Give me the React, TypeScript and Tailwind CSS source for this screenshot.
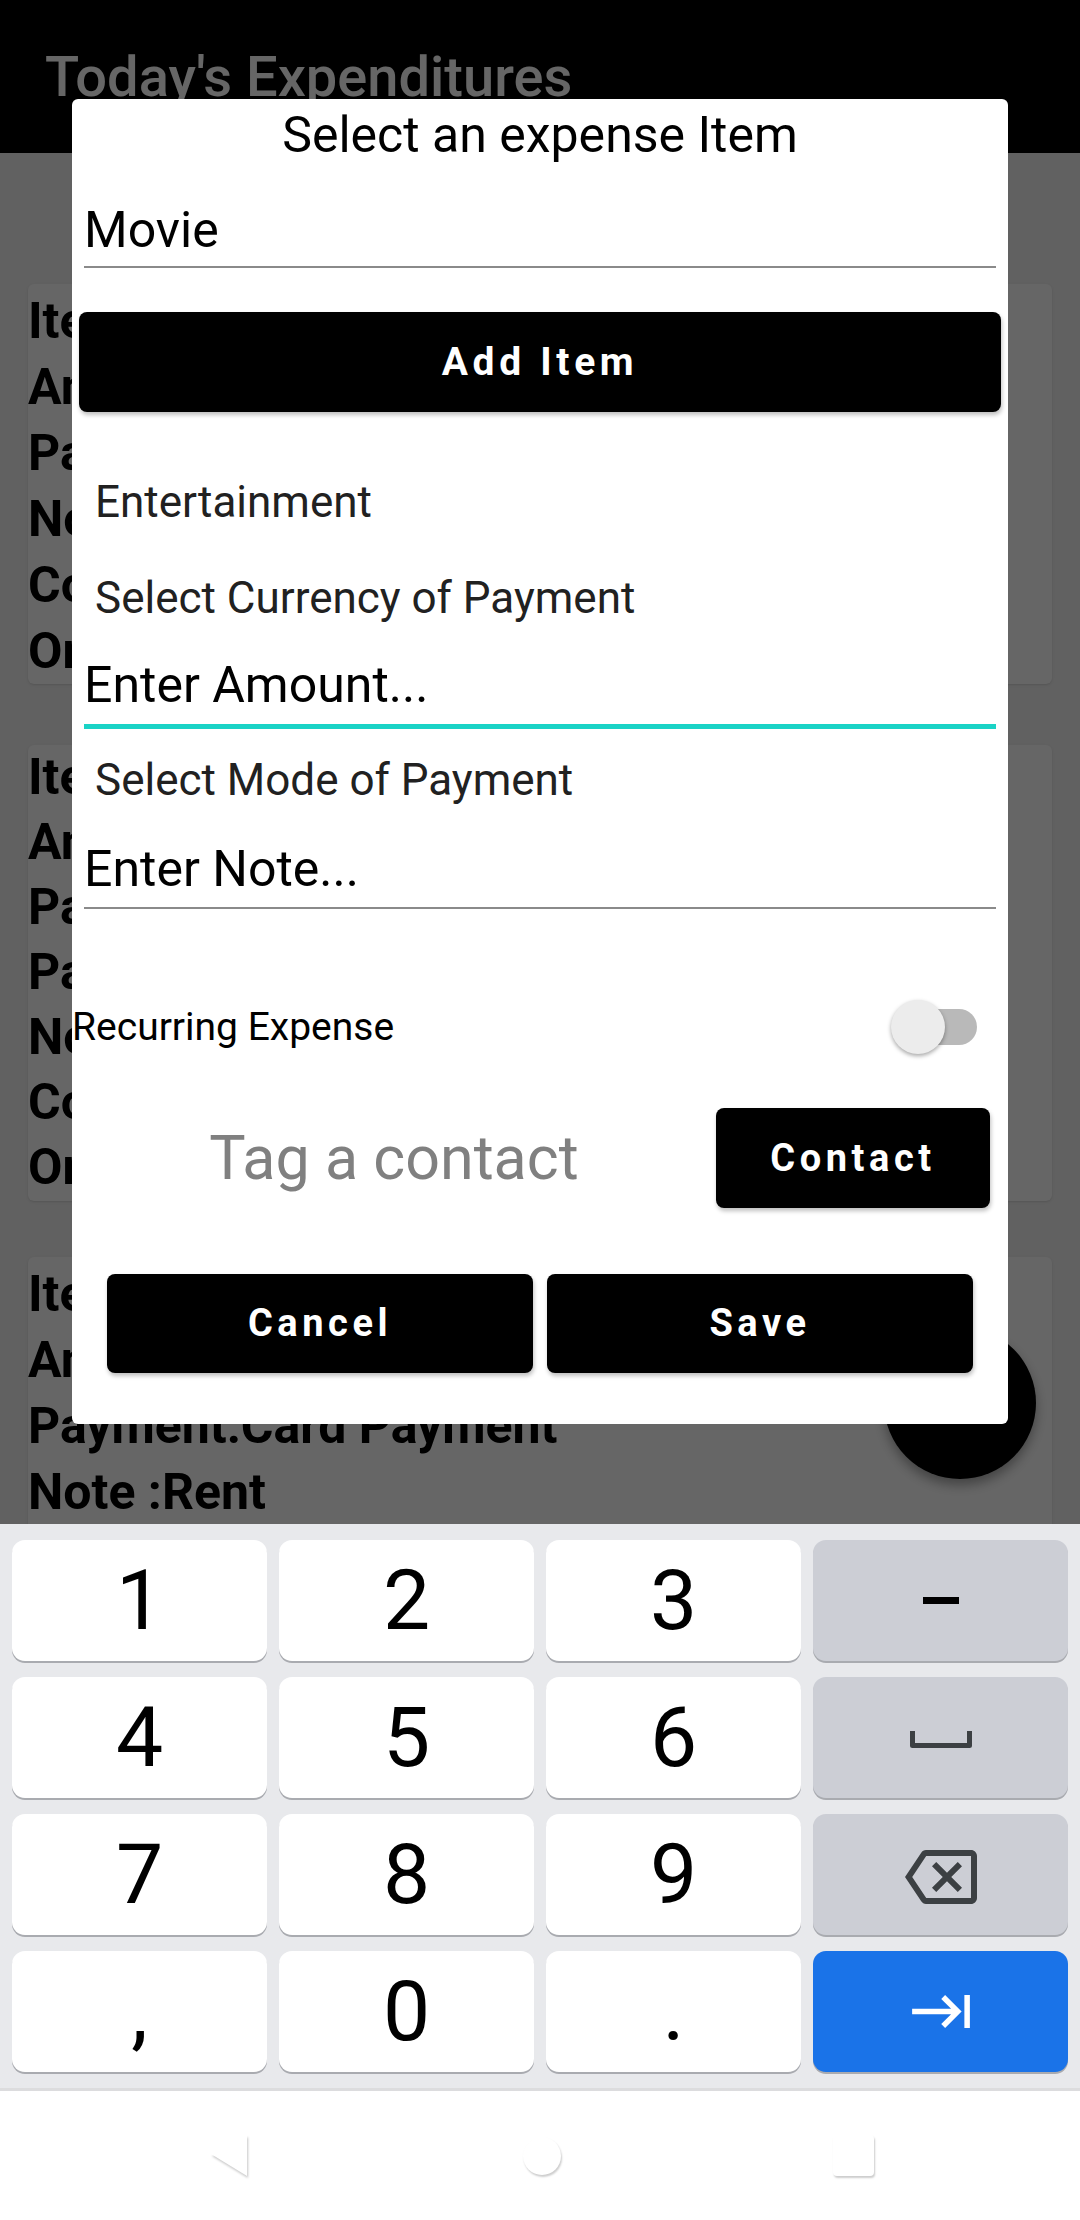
import React from 'react';

const cards: string[][] = [
  ['Item :Popcorn', 'Amount :150', 'Payment:Cash', 'Note :Snacks', 'Contact :None', 'On :Today'],
  ['Item :Groceries', 'Amount :1200', 'Payment:Card Payment', 'Paid in :INR', 'Note :Weekly', 'Contact :None', 'On :Today'],
  ['Item :House Rent', 'Amount :15000', 'Payment:Card Payment', 'Note :Rent', 'Contact :None', 'On :Today'],
];

const Key: React.FC<{ kind?: 'white' | 'fn' | 'blue'; children: React.ReactNode }> = ({ kind = 'white', children }) => {
  const bg = kind === 'white' ? 'bg-white' : kind === 'fn' ? 'bg-[#ccced5]' : 'bg-[#1a73e8]';
  return (
    <div className={`${bg} h-[121px] rounded-[13px] shadow-[0_2px_0_#a9abb0] flex items-center justify-center text-[84px] leading-none text-black`}>
      {children}
    </div>
  );
};

const ActionButton: React.FC<{ label: string; className?: string }> = ({ label, className = '' }) => (
  <div className={`bg-black rounded-[8px] shadow-[1px_3px_4px_rgba(0,0,0,0.25)] flex items-center justify-center text-white font-bold text-[38px] tracking-[0.12em] ${className}`}>
    {label}
  </div>
);

export default function App() {
  return (
    <div className="w-[1080px] h-[2220px] overflow-hidden flex flex-col font-['Roboto',sans-serif]">
      {/* App behind the dialog */}
      <div className="relative h-[1524px] flex flex-col overflow-hidden">
        <div className="h-[153px] bg-black flex items-center px-[45px] shrink-0">
          <span className="text-white text-[56px] font-medium leading-none">Today's Expenditures</span>
        </div>
        <div className="flex-1 bg-[#f2f2f2] px-[28px] pt-[131px] flex flex-col">
          <div className="bg-white rounded-[6px] shadow-sm h-[400px] pt-[4px] overflow-hidden">
            {cards[0].map((l) => (
              <div key={l} className="text-[50px] font-bold leading-[66px] text-black whitespace-nowrap">{l}</div>
            ))}
          </div>
          <div className="bg-white rounded-[6px] shadow-sm h-[456px] mt-[61px] overflow-hidden">
            {cards[1].map((l) => (
              <div key={l} className="text-[50px] font-bold leading-[65px] text-black whitespace-nowrap">{l}</div>
            ))}
          </div>
          <div className="bg-white rounded-[6px] shadow-sm h-[400px] mt-[56px] pt-[4px]">
            {cards[2].map((l) => (
              <div key={l} className="text-[50px] font-bold leading-[66px] text-black whitespace-nowrap">{l}</div>
            ))}
          </div>
        </div>

        {/* FAB */}
        <div className="absolute left-[884px] top-[1327px] w-[152px] h-[152px] rounded-full bg-black shadow-[0_6px_12px_rgba(0,0,0,0.35)]" />

        {/* Scrim */}
        <div className="absolute inset-0 bg-black/60" />

        {/* Dialog */}
        <div className="absolute top-[99px] left-[72px] w-[936px] bg-white rounded-[6px] flex flex-col pb-[51px]">
          <div className="h-[72px] flex items-center justify-center text-[50px] text-black leading-none">
            Select an expense Item
          </div>

          <div className="mx-[12px] mt-[23px] h-[74px] border-b-2 border-[#8a8a8a] flex items-center text-[50px] text-black leading-none">
            Movie
          </div>

          <ActionButton label="Add Item" className="mx-[7px] mt-[44px] h-[100px] text-[39px] tracking-[0.09em]" />

          <div className="mt-[42px] h-[96px] pl-[23px] flex items-center text-[44px] text-[#212121] leading-none">
            Entertainment
          </div>
          <div className="h-[96px] pl-[23px] flex items-center text-[44px] text-[#212121] leading-none">
            Select Currency of Payment
          </div>

          <div className="mx-[12px] h-[83px] border-b-[5px] border-[#1ad3c6] flex items-center text-[50px] text-black leading-none">
            Enter Amount...
          </div>

          <div className="h-[102px] pl-[23px] flex items-center text-[44px] text-[#212121] leading-none">
            Select Mode of Payment
          </div>

          <div className="mx-[12px] h-[78px] border-b-2 border-[#8a8a8a] flex items-center text-[50px] text-black leading-none">
            Enter Note...
          </div>

          <div className="mt-[78px] h-[80px] pr-[31px] flex items-center justify-between">
            <span className="text-[39px] text-black leading-none">Recurring Expense</span>
            <div className="relative w-[80px] h-[36px] rounded-full bg-[#b9b9b9]">
              <div className="absolute left-[-6px] top-[-9px] w-[54px] h-[54px] rounded-full bg-[#ececec] shadow-[0_2px_4px_rgba(0,0,0,0.35)]" />
            </div>
          </div>

          <div className="mt-[41px] h-[100px] pr-[18px] flex items-center">
            <div className="flex-1 flex items-center justify-center text-[61px] text-[#808080] leading-none">
              Tag a contact
            </div>
            <ActionButton label="Contact" className="w-[274px] h-[100px]" />
          </div>

          <div className="mt-[66px] h-[99px] px-[35px] flex gap-[14px]">
            <ActionButton label="Cancel" className="flex-1 h-[99px]" />
            <ActionButton label="Save" className="flex-1 h-[99px]" />
          </div>
        </div>
      </div>

      {/* Numeric keyboard */}
      <div className="h-[564px] bg-[#e8e9ec] px-[12px] py-[16px] grid grid-cols-4 gap-x-[12px] gap-y-[16px]">
        <Key>1</Key>
        <Key>2</Key>
        <Key>3</Key>
        <Key kind="fn">
          <svg width="36" height="8" viewBox="0 0 36 8"><rect x="0" y="0" width="36" height="7" fill="#000" /></svg>
        </Key>
        <Key>4</Key>
        <Key>5</Key>
        <Key>6</Key>
        <Key kind="fn">
          <svg width="62" height="17" viewBox="0 0 62 17" className="mt-[4px]">
            <path d="M2.5 0 V14.5 H59.5 V0" fill="none" stroke="#3c4043" strokeWidth="5" strokeLinejoin="round" />
          </svg>
        </Key>
        <Key>7</Key>
        <Key>8</Key>
        <Key>9</Key>
        <Key kind="fn">
          <svg width="72" height="72" viewBox="0 0 24 24" className="mt-[4px]">
            <path
              fill="#3c4043"
              d="M22 3H7c-.69 0-1.230.35-1.59.88L0 12l5.41 8.11c.36.53.9.89 1.59.89h15c1.1 0 2-.9 2-2V5c0-1.1-.9-2-2-2zm0 16H7.07L2.4 12l4.66-7H22v14zm-11.59-2L14 13.41 17.59 17 19 15.59 15.410 12 19 8.41 17.59 7 14 10.59 10.41 7 9 8.41 12.59 12 9 15.59z"
            />
          </svg>
        </Key>
        <Key>,</Key>
        <Key>0</Key>
        <Key>.</Key>
        <Key kind="blue">
          <svg width="58" height="33" viewBox="1 6 21 12">
            <path fill="#fff" d="M11.59 7.41L15.17 11H1v2h14.17l-3.59 3.59L13 18l6-6-6-6-1.41 1.41zM20 6v12h2V6h-2z" />
          </svg>
        </Key>
      </div>

      {/* Navigation bar */}
      <div className="flex-1 bg-white border-t-[3px] border-[#dcdcde] flex items-center justify-center gap-[272px]">
        <svg width="44" height="48" viewBox="0 0 44 48" className="drop-shadow-[1px_2px_1px_rgba(0,0,0,0.22)]">
          <path d="M40 3 V44 L4 22 Z" fill="#fff" strokeLinejoin="round" />
        </svg>
        <div className="w-[38px] h-[38px] rounded-full bg-white shadow-[1px_2px_2px_rgba(0,0,0,0.2)]" />
        <div className="w-[41px] h-[41px] rounded-[4px] bg-white shadow-[1px_2px_2px_rgba(0,0,0,0.2)]" />
      </div>
    </div>
  );
}
